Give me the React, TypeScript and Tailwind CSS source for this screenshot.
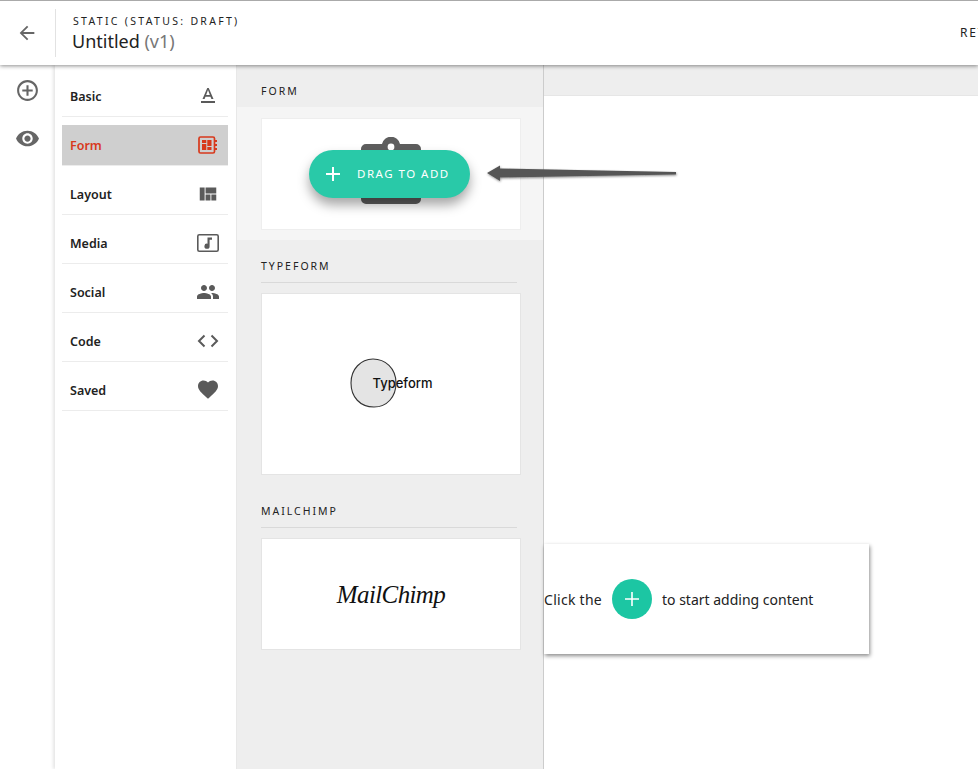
import type { ReactNode } from 'react'
import { MdAddCircleOutline, MdArrowBack, MdFavorite, MdPeople, MdTextFormat, MdViewQuilt, MdVisibility } from 'react-icons/md'

const FONT = "font-['Noto_Sans',sans-serif]"

function FormIcon() {
  return (
    <svg width="20" height="18" viewBox="0 0 20 18" className="text-[#d8391c]">
      <rect x="1" y="1" width="15.5" height="16" rx="1.5" fill="none" stroke="currentColor" strokeWidth="1.7" />
      <path d="M4 4h4.3v3H4zM4 8h4.3v6H4zM9.3 4h4.2v6H9.3zM9.3 11h4.2v3H9.3z" fill="currentColor" />
      <path d="M17 4h2v2h-2zM17 8h2v2h-2zM17 12h2v2h-2z" fill="currentColor" />
    </svg>
  )
}

function MediaIcon() {
  return (
    <svg width="22" height="18" viewBox="0 0 22 18" className="text-[#5a5a5a]">
      <rect x="0.8" y="0.8" width="20.4" height="16.4" rx="1.5" fill="none" stroke="currentColor" strokeWidth="1.6" />
      <path d="M10.5 3.5h4.5v2.2h-2.4v6.5a2.6 2.6 0 1 1-2.1-2.5z" fill="currentColor" />
    </svg>
  )
}

function CodeIcon() {
  return (
    <svg width="22" height="14" viewBox="0 0 22 14" fill="none" stroke="#5a5a5a" strokeWidth="2">
      <path d="M7.5 1.5 2 7l5.5 5.5M14.5 1.5 20 7l-5.5 5.5" />
    </svg>
  )
}

const categories: { name: string; icon: ReactNode; active?: boolean }[] = [
  { name: 'Basic', icon: <MdTextFormat size={24} color="#5a5a5a" /> },
  { name: 'Form', icon: <FormIcon />, active: true },
  { name: 'Layout', icon: <MdViewQuilt size={22} color="#5a5a5a" /> },
  { name: 'Media', icon: <MediaIcon /> },
  { name: 'Social', icon: <MdPeople size={26} color="#5a5a5a" /> },
  { name: 'Code', icon: <CodeIcon /> },
  { name: 'Saved', icon: <MdFavorite size={25} color="#5a5a5a" className="-translate-y-px" /> },
]

function SectionLabel({ children }: { children: ReactNode }) {
  return <div className="text-[10.5px] leading-4 tracking-[0.19em] text-[#222]">{children}</div>
}

function ClipboardShape() {
  return (
    <svg width="60" height="67" viewBox="0 0 60 67" className="absolute left-[99px] top-[18px]">
      <path
        d="M5 7h16a9.2 9.2 0 0 1 18 0h16a5 5 0 0 1 5 5v50a5 5 0 0 1-5 5H5a5 5 0 0 1-5-5V12a5 5 0 0 1 5-5z"
        fill="#5e5e5e"
      />
      <circle cx="30" cy="10" r="3.4" fill="#fff" />
    </svg>
  )
}

export default function App() {
  return (
    <div className={`relative flex h-screen flex-col overflow-hidden bg-white ${FONT}`}>
      {/* Top bar */}
      <header className="relative z-20 flex h-[65px] shrink-0 items-center overflow-hidden border-t border-[#aaaaaa] bg-white shadow-[0_1px_4px_rgba(0,0,0,0.45)]">
        <div className="flex w-[53px] shrink-0 justify-center">
          <MdArrowBack size={22} color="#666" />
        </div>
        <div className="ml-[2px] h-12 w-px shrink-0 bg-[#e2e2e2]" />
        <div className="w-[904px] shrink-0 pl-4 pt-px">
          <div className="pl-px text-[10.5px] leading-[14px] tracking-[0.22em] text-[#222]">STATIC (STATUS: DRAFT)</div>
          <div className="mt-px text-[18px] leading-6 text-[#222]">
            Untitled <span className="text-[#777]">(v1)</span>
          </div>
        </div>
        <div className="shrink-0 text-[12px] tracking-[0.15em] text-[#222]">RET</div>
      </header>

      <div className="flex min-h-0 flex-1">
        {/* Icon rail */}
        <div className="flex w-[55px] shrink-0 flex-col items-center gap-[23px] pt-[13px] text-[#666]">
          <MdAddCircleOutline size={25} />
          <MdVisibility size={25} />
        </div>

        {/* Categories */}
        <nav className="w-[181px] shrink-0 bg-white pl-[7px] pr-[8px] pt-[11px] shadow-[-2px_0_3px_rgba(0,0,0,0.1)]">
          {categories.map((c, i) => (
            <div key={c.name} className={`border-b border-[#ececec] ${i > 0 ? 'pt-2' : ''}`}>
              <div
                className={`flex h-10 items-center justify-between pl-2 pr-2 text-[12.5px] font-semibold ${
                  c.active ? 'bg-[#cfcfcf] text-[#d8391c]' : 'text-[#222]'
                }`}
              >
                <span className="pt-[2px]">{c.name}</span>
                <span className="flex w-[24px] justify-center">{c.icon}</span>
              </div>
            </div>
          ))}
        </nav>

        {/* Block panel */}
        <aside className="w-[308px] shrink-0 border-l border-r border-l-[#e8e8e8] border-r-[#cccccc] bg-[#eeeeee]">
          <div className="flex h-[42px] items-end px-6 pb-2">
            <SectionLabel>FORM</SectionLabel>
          </div>
          <div className="bg-[#f5f5f5] px-6 pt-[11px] pb-[10px]">
            <div className="relative h-28 w-[260px] border border-[#eeeeee] bg-white">
              <ClipboardShape />
              <div className="absolute left-[47px] top-[31px] flex h-12 w-[161px] items-center rounded-full bg-[#29c9a8] pl-4 text-white shadow-[0_7px_12px_rgba(0,0,0,0.35)]">
                <svg width="16" height="16" viewBox="0 0 16 16" stroke="#fff" strokeWidth="2">
                  <path d="M8 1v14M1 8h14" />
                </svg>
                <span className="ml-[16px] text-[11.5px] tracking-[0.13em]">DRAG TO ADD</span>
              </div>
            </div>
          </div>

          <div className="px-6 pt-[18px]">
            <div className="mr-[2px] border-b border-[#d9d9d9] pb-2">
              <SectionLabel>TYPEFORM</SectionLabel>
            </div>
            <div className="relative mt-[10px] flex h-[182px] w-[260px] items-center justify-center border border-[#e4e4e4] bg-white">
              <svg width="48" height="50" viewBox="0 0 48 50" className="absolute left-[88px] top-[64px]">
                <path
                  d="M23 1c12 0 23 9 23 24 0 14-9 24-22 24C10 49 1 39 1 25 1 11 11 1 23 1z"
                  fill="#e4e4e4"
                  stroke="#333"
                  strokeWidth="1.1"
                />
              </svg>
              <span className="relative ml-[23px] font-['Inter',sans-serif] text-[13px] font-medium text-[#111]">Typeform</span>
            </div>
          </div>

          <div className="px-6 pt-[28px]">
            <div className="mr-[2px] border-b border-[#d9d9d9] pb-2">
              <SectionLabel>MAILCHIMP</SectionLabel>
            </div>
            <div className="mt-[10px] flex h-28 w-[260px] items-center justify-center border border-[#e4e4e4] bg-white">
              <span className="font-['Liberation_Serif',serif] text-[25px] italic leading-none tracking-tight text-[#111]">MailChimp</span>
            </div>
          </div>
        </aside>

        {/* Canvas */}
        <main className="min-w-0 flex-1 bg-white">
          <div className="h-[31px] border-b border-[#e6e6e6] bg-[#eeeeee]" />
        </main>
      </div>

      {/* Hint card */}
      <div className="absolute left-[544px] top-[544px] z-10 flex h-[110px] w-[325px] items-center bg-white text-[14px] text-[#222] shadow-[1px_2px_4px_rgba(0,0,0,0.45)]">
        <span className="w-[68px] pt-px tracking-[0.02em]">Click the</span>
        <span className="mr-[10px] flex h-10 w-10 items-center justify-center rounded-full bg-[#1cc6a3]">
          <svg width="14" height="14" viewBox="0 0 14 14" stroke="#fff" strokeWidth="1.6">
            <path d="M7 0v14M0 7h14" />
          </svg>
        </span>
        <span className="pt-px">to start adding content</span>
      </div>

      {/* Annotation arrow */}
      <svg width="200" height="30" viewBox="0 0 200 30" className="absolute left-[484px] top-[158px] z-30">
        <defs>
          <filter id="arrow-shadow" x="-5%" y="-30%" width="110%" height="170%">
            <feDropShadow dx="0.5" dy="1" stdDeviation="0.8" floodColor="#000" floodOpacity="0.45" />
          </filter>
        </defs>
        <path d="M3 15 16 7.5v3l176 3.5v2.5L16 19.5v3.5z" fill="#555" filter="url(#arrow-shadow)" />
      </svg>
    </div>
  )
}
